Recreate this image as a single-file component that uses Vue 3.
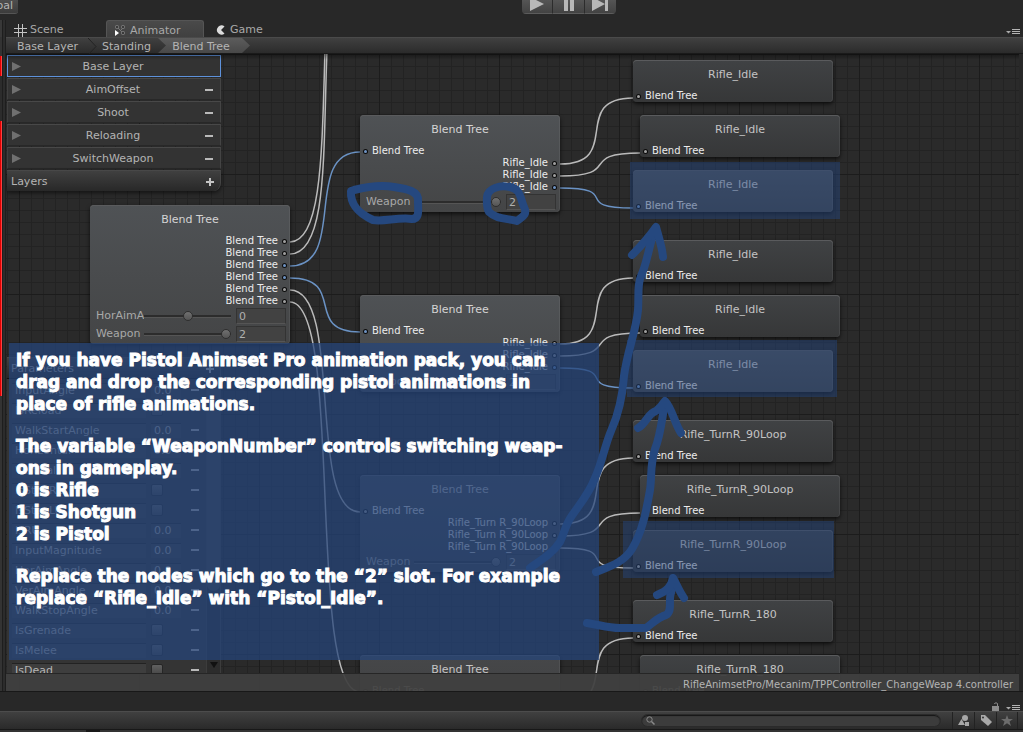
<script setup>
import { ref } from 'vue'

const layers = ['Base Layer', 'AimOffset', 'Shoot', 'Reloading', 'SwitchWeapon']

const params = ref([
  { name: 'InputAngle', value: '0.0' },
  { name: 'IsReload', on: false },
  { name: 'WalkStartAngle', value: '0.0' },
  { name: 'Horizontal', value: '0.0' },
  { name: 'Vertical', value: '0.0' },
  { name: 'IsStopRU', on: false },
  { name: 'IsStopLU', on: false },
  { name: 'IsRU', value: '0.0' },
  { name: 'InputMagnitude', value: '0.0' },
  { name: 'HorAimAngle', value: '0.0' },
  { name: 'VerAimAngle', value: '0.0' },
  { name: 'WalkStopAngle', value: '0.0' },
  { name: 'IsGrenade', on: false },
  { name: 'IsMelee', on: false },
  { name: 'IsDead', on: false },
])

const idle = ['Rifle_Idle', 'Rifle_Idle', 'Rifle_Idle']
const turn = ['Rifle_Turn R_90Loop', 'Rifle_Turn R_90Loop', 'Rifle_Turn R_90Loop']
const weapon = () => [{ name: 'Weapon', min: 0, max: 2, value: 2 }]

// Node positions are graph coordinates, measured from the canvas corner.
const nodes = ref([
  {
    x: 84, y: 151, title: 'Blend Tree', tone: 'bright', outputs: Array(6).fill('Blend Tree'), active: [2, 3],
    sliders: [{ name: 'HorAimAngle', min: -90, max: 90, value: 0 }, ...weapon()],
  },
  { x: 354, y: 61, title: 'Blend Tree', tone: 'bright', input: true, lit: true, outputs: idle, active: [2], sliders: weapon() },
  { x: 354, y: 241, title: 'Blend Tree', tone: 'bright', input: true, lit: true, outputs: idle, active: [2], sliders: weapon() },
  { x: 354, y: 421, title: 'Blend Tree', tone: 'mid', input: true, outputs: turn, active: [], sliders: weapon() },
  { x: 354, y: 601, title: 'Blend Tree', tone: 'mid', input: true, outputs: turn, active: [], sliders: weapon() },
  { x: 627, y: 6, title: 'Rifle_Idle', input: true },
  { x: 634, y: 61, title: 'Rifle_Idle', input: true },
  { x: 627, y: 116, title: 'Rifle_Idle', tone: 'bright', input: true, lit: true },
  { x: 627, y: 186, title: 'Rifle_Idle', input: true },
  { x: 634, y: 241, title: 'Rifle_Idle', input: true },
  { x: 627, y: 296, title: 'Rifle_Idle', tone: 'bright', input: true, lit: true },
  { x: 627, y: 366, title: 'Rifle_TurnR_90Loop', input: true },
  { x: 634, y: 421, title: 'Rifle_TurnR_90Loop', input: true },
  { x: 627, y: 476, title: 'Rifle_TurnR_90Loop', input: true },
  { x: 627, y: 546, title: 'Rifle_TurnR_180', input: true },
  { x: 634, y: 601, title: 'Rifle_TurnR_180', input: true },
])

const link = (x1, y1, x2, y2, lit = false, bend = 64) => ({
  d: `M${x1} ${y1} C${x1 + bend} ${y1} ${x2 - bend} ${y2} ${x2} ${y2}`,
  lit,
})
const links = [
  { d: 'M284 188 C316 188 316 96 319 -4' },
  { d: 'M284 200 C322 200 317 96 321 -4' },
  link(284, 212, 354, 98, true, 58),
  link(284, 224, 354, 278, true, 58),
  link(284, 236, 354, 458, false, 54),
  link(284, 248, 354, 638, false, 54),
  link(554, 110, 627, 44),
  link(554, 122, 634, 99),
  link(554, 134, 627, 154, true),
  link(554, 290, 627, 224),
  link(554, 302, 634, 279),
  link(554, 314, 627, 334, true),
  link(554, 470, 627, 404),
  link(554, 482, 634, 459),
  link(554, 494, 627, 514),
  link(554, 650, 627, 584),
  link(554, 662, 634, 639),
]

const marks = [
  { x: 624, y: 108, w: 210, h: 57 },
  { x: 621, y: 286, w: 210, h: 57 },
  { x: 617, y: 467, w: 211, h: 57 },
]

const px = (n) => n + 'px'
</script>

<template>
  <div class="editor">
    <header class="topbar">
      <button class="global" type="button">Global</button>
      <div class="play">
        <button type="button" aria-label="Play"><svg width="16" height="14"><path d="M1 0 15 7 1 14z" /></svg></button>
        <button type="button" aria-label="Pause"><svg width="16" height="14"><path d="M3 0h4v14H3zM9 0h4v14H9z" /></svg></button>
        <button type="button" aria-label="Step"><svg width="16" height="14"><path d="M0 0 13 7 0 14zM13 0h3v14h-3z" /></svg></button>
      </div>
    </header>

    <div class="workspace">
      <div class="rail">
        <i class="rail-bar"></i><i class="red short"></i><i class="rail-gap"></i><i class="red tall"></i><i class="rail-rest"></i>
      </div>
      <main class="dock">
        <nav class="tabs">
          <button class="tab scene" type="button">
            <svg width="13" height="13" stroke="#c4c4c4" fill="none"><path d="M4.500 0v13M8.500 0v13M0 4.500h13M0 8.500h13" /></svg>Scene
          </button>
          <button class="tab animator on" type="button">
            <svg width="11" height="11">
              <path d="M2 2 9 9M9 2 5 6" stroke="#777" />
              <g fill="#3a3a3a" stroke="#808080"><rect x=".5" y=".5" width="3" height="3" rx="1" /><rect x="6.500" y=".5" width="3" height="3" rx="1" /><rect x="6.500" y="6.500" width="3" height="3" rx="1" /></g>
              <path d="M0 5 4 8 0 11z" fill="#fff" />
            </svg>Animator
          </button>
          <button class="tab game" type="button">
            <svg width="10" height="10"><path d="M8.500 1.400A4.500 4.800 0 1 0 8.500 8.600L5 5z" fill="#dcdcdc" /></svg>Game
          </button>
          <button class="menu" type="button" aria-label="Panel menu">
            <svg width="14" height="6"><path d="M0 2h5L2.500 4.500z" fill="#aaa" /><path d="M6 .5h8M6 2.500h8M6 4.500h8" stroke="#b4b4b4" /></svg>
          </button>
        </nav>
        <nav class="crumbs">
          <button type="button">Base Layer</button>
          <svg width="9" height="17"><path d="M0 0 8 8.500 0 17" fill="none" stroke="#222" /></svg>
          <button type="button" class="standing">Standing</button>
          <button type="button" class="current">Blend Tree</button>
        </nav>

        <section class="canvas">
          <svg class="wires" width="1020" height="700">
            <path v-for="(l, i) in links" :key="i" :d="l.d" :class="{ lit: l.lit }" />
          </svg>

          <article
            v-for="(n, i) in nodes" :key="i" class="node" :class="[n.tone, { leaf: !n.sliders }]"
            :style="{ left: px(n.x), top: px(n.y) }"
          >
            <h3>{{ n.title }}</h3>
            <div v-if="n.input" class="port in"><i :class="{ lit: n.lit }"></i>Blend Tree</div>
            <div v-for="(o, k) in n.outputs" :key="k" class="port out">{{ o }}<i :class="{ lit: n.active.includes(k) }"></i></div>
            <div v-for="s in n.sliders" :key="s.name" class="slide">
              <label :for="s.name + i">{{ s.name }}</label>
              <input :id="s.name + i" v-model="s.value" type="range" :min="s.min" :max="s.max">
              <input v-model="s.value" type="text" :aria-label="s.name + ' value'">
            </div>
          </article>

          <aside class="layers">
            <button v-for="(l, i) in layers" :key="l" type="button" class="layer" :class="{ on: i === 0 }">
              <svg width="9" height="9"><path d="M0 0 9 4.500 0 9z" fill="#707070" /></svg>
              <span>{{ l }}</span><i class="minus" :class="{ none: i === 0 }"></i>
            </button>
            <div class="layers-foot"><span>Layers</span><button type="button" class="plus" aria-label="Add layer"></button></div>
          </aside>

          <aside class="params">
            <div class="params-head"><span>Parameters</span><button type="button" class="plus" aria-label="Add parameter"></button></div>
            <div class="params-body">
              <div class="rows">
                <div v-for="p in params" :key="p.name" class="row">
                  <input v-model="p.name" class="pname" type="text" aria-label="Parameter name">
                  <span class="pcell">
                    <input v-if="p.value" v-model="p.value" class="pval" type="text" :aria-label="p.name">
                    <input v-else v-model="p.on" type="checkbox" :aria-label="p.name">
                  </span>
                  <button type="button" class="minus" :aria-label="'Remove ' + p.name"></button>
                </div>
              </div>
              <div class="scroll"><div class="thumb"></div><svg width="8" height="6"><path d="M0 0h8L4 6z" fill="#111" /></svg></div>
            </div>
          </aside>

          <div
            v-for="(m, i) in marks" :key="i" class="mark"
            :style="{ left: px(m.x), top: px(m.y), width: px(m.w), height: px(m.h) }"
          ></div>
          <div class="note-bg"></div>
          <svg class="ink" width="1020" height="700" viewBox="6 54 1020 700">
            <path d="M354 190C366 187 382 185 394 187C407 189 419 191 418 201C418 210 420 219 412 219C398 217 384 222 373 220C360 214 350 206 351 191z" />
            <path d="M487 197C488 188 500 185 510 187C521 189 520 198 524 207C528 215 522 217 517 221C508 218 497 220 489 212C486 207 487 202 487 197z" />
            <path d="M530 568C541 560 552 554 560 542C564 534 565 526 571 517C579 505 589 494 595 478C602 463 605 445 611 431C621 409 623 390 624 376C627 352 636 332 638 310C639 296 637 285 641 276C647 264 649 245 655 229" />
            <path d="M632 255C640 247 649 237 656 227C658 235 662 246 663 257" />
            <path d="M596 572C611 566 624 562 632 549C642 532 646 513 650 490C652 477 650 464 655 449C661 434 662 417 665 403" />
            <path d="M638 428C646 424 648 413 656 411Q661 407 665 401C672 408 674 422 681 433" />
            <path d="M587 623C600 625 608 628 620 628H646C653 623 658 617 666 615C673 611 668 600 671 593L673 580" />
            <path d="M657 595C667 591 671 587 673 578C677 585 679 591 684 598" />
          </svg>
          <div class="note">
            <p>If you have Pistol Animset Pro animation pack, you can<br>drag and drop the corresponding pistol animations in<br>place of rifle animations.</p>
            <p>The variable “WeaponNumber” controls switching weap-<br>ons in gameplay.<br>0 is Rifle<br>1 is Shotgun<br>2 is Pistol</p>
            <p>Replace the nodes which go to the “2” slot. For example<br>replace “Rifle_Idle” with “Pistol_Idle”.</p>
          </div>
          <footer class="path">RifleAnimsetPro/Mecanim/TPPController_ChangeWeap 4.controller</footer>
        </section>
      </main>
    </div>

    <div class="lower-head">
      <svg width="8" height="9"><path d="M0 4h7v5H0z" fill="#8c8c8c" /><path d="M2.500 2V1.500Q4 0 5.500 1.500V4" fill="none" stroke="#8c8c8c" /></svg>
      <button class="menu" type="button" aria-label="Panel menu">
        <svg width="14" height="6"><path d="M0 2h5L2.500 4.500z" fill="#aaa" /><path d="M6 .5h8M6 2.500h8M6 4.500h8" stroke="#b4b4b4" /></svg>
      </button>
    </div>
    <div class="lower-bar">
      <label class="search">
        <svg width="9" height="9" fill="none" stroke="#8a8a8a"><circle cx="3.500" cy="3.500" r="2.700" /><path d="M5.500 5.500 8.500 8.500" stroke-width="1.500" /></svg>
        <input type="text" aria-label="Search">
      </label>
      <button type="button" class="tool" aria-label="Filter by type"><svg width="12" height="11" fill="#a8a8a8"><circle cx="7" cy="3" r="3" /><path d="M3.500 4 7 10H0zM7 7h4v4H7z" /></svg></button>
      <button type="button" class="tool" aria-label="Filter by label"><svg width="12" height="11"><path d="M1 0h4l7 7-4 4-7-6z" fill="#a8a8a8" /><circle cx="3" cy="2.500" r="1" fill="#333" /></svg></button>
      <button type="button" class="tool last" aria-label="Favourite"><svg width="12" height="11"><path d="M6 0 7.500 4H12L8.500 6.500 10 11 6 8.300 2 11 3.500 6.500 0 4h4.500z" fill="#6c6c6c" /></svg></button>
    </div>
    <div class="lower-edge"><i></i></div>
  </div>
</template>

<style>
body { background: #282828; }
</style>

<style scoped>
* { box-sizing: border-box; }
.editor {
  display: flex; flex-direction: column; height: 100vh; overflow: hidden;
  background: #282828; color: #b4b4b4; font: 11px/14px "DejaVu Sans", sans-serif;
}
button, input { font: inherit; color: inherit; border: 0; background: none; margin: 0; padding: 0; }
button { cursor: pointer; }
svg { flex: none; display: block; }
i { flex: none; display: block; }

.topbar { display: grid; grid-template-columns: 1fr auto 1fr; height: 14px; margin-bottom: 6px; }
.global {
  width: 18px; display: flex; justify-content: flex-end; padding-right: 5px; overflow: hidden; line-height: 12px;
  background: linear-gradient(#4e4e4e, #3c3c3c); border-radius: 0 0 3px 0; border-bottom: 1px solid #555;
}
.play { display: flex; grid-column: 2; margin-left: 114px; width: 94px; overflow: hidden; border-radius: 0 0 4px 4px; }
.play button {
  flex: 1; display: flex; align-items: flex-end; justify-content: center; height: 14px; padding-bottom: 2px;
  background: linear-gradient(#555, #434343); border-bottom: 1px solid #5c5c5c; border-right: 1px solid #2c2c2c;
}
.play button:last-child { border-right: 0; }
.play svg { fill: #b8b8b8; }

.workspace { flex: 1; display: flex; min-height: 0; }
.rail { width: 6px; display: flex; flex-direction: column; padding-top: 17px; background: linear-gradient(90deg, #383838 2px, #1e1e1e 2px 3px, #2c2c2c 3px 5px, #1e1e1e 5px); }
.rail i { width: 2px; }
.rail-bar { height: 19px; background: #333; }
.rail-gap { height: 45px; background: #2c2c2c; }
.red { background: #e00000; border-right: 1px solid #ff4040; }
.short { height: 20px; }
.tall { height: 275px; }
.rail-rest { flex: 1; background: #333; }

.dock { flex: 1; min-width: 0; display: flex; flex-direction: column; }
.tabs { display: flex; height: 17px; color: #a8a8a8; }
.tab { display: flex; align-items: center; gap: 3px; padding-top: 3px; }
.scene { width: 100px; padding-left: 8px; }
.animator { width: 98px; padding-left: 8px; gap: 4px; }
.animator.on { background: linear-gradient(#4a4a4a, #404040); border: 1px solid #555; border-bottom: 0; border-radius: 3px 3px 0 0; }
.game { padding-left: 12px; gap: 4px; }
.menu { margin-left: auto; padding-right: 3px; }
.tabs .menu { padding-top: 7px; }

.crumbs {
  display: flex; height: 17px; background: linear-gradient(#404040, #2b2b2b);
  border-top: 1px solid #4a4a4a; border-bottom: 1px solid #1a1a1a; padding-left: 11px;
}
.crumbs button { line-height: 15px; padding-top: 1px; }
.crumbs button:first-child { width: 71px; text-align: left; }
.crumbs .standing { width: 60px; padding: 1px 5px 0; text-align: left; }
.crumbs .current { width: 92px; margin-left: 1px; padding-right: 6px; background: linear-gradient(#5c5c5c, #484848); clip-path: polygon(0 0, 84px 0, 100% 50%, 84px 100%, 0 100%, 8px 50%); }

.canvas {
  flex: 1; position: relative; overflow: hidden; min-height: 0; margin-right: 4px;
  background:
    repeating-linear-gradient(90deg, transparent 0 13px, #1c1c1c 13px 14px, transparent 14px 120px),
    repeating-linear-gradient(#1c1c1c 0 1px, transparent 1px 120px),
    repeating-linear-gradient(90deg, transparent 0 1px, #232323 1px 2px, transparent 2px 12px),
    repeating-linear-gradient(#232323 0 1px, transparent 1px 12px),
    #2a2a2a;
}
.canvas::after { content: ""; position: absolute; inset: 0 0 auto; height: 6px; background: linear-gradient(#0006, #0000); pointer-events: none; }
.wires, .ink { position: absolute; left: 0; top: 0; pointer-events: none; }
.wires { fill: none; stroke: #bababa; stroke-width: 1.500; }
.wires .lit { stroke: #6a92c4; }
.ink { fill: none; stroke: #25487f; stroke-width: 8; stroke-linecap: round; stroke-linejoin: round; }

.node {
  position: absolute; width: 200px; padding-bottom: 1px; border-radius: 4px; color: #c4c4c4;
  background: linear-gradient(#464749, #3c3d3e);
  box-shadow: inset 0 1px #5a5b5d, inset -1px 0 #ffffff10, 0 2px 4px #000a;
}
.node.leaf { padding-bottom: 0; background: linear-gradient(#404244, #363738); }
.node.bright { background: linear-gradient(#4f5255, #444546); color: #d4d4d4; }
.node h3 { margin: 0; font-size: 11px; font-weight: 400; line-height: 30px; height: 30px; text-align: center; }
.port { display: flex; align-items: center; gap: 5px; height: 12px; padding: 0 4px; font-size: 10px; line-height: 12px; color: #ececec; }
.port.out { justify-content: flex-end; }
.port i { width: 3px; height: 3px; border-radius: 50%; background: #a0a0a0; box-shadow: 0 0 0 1px #0c0c0c; margin-top: 1px; }
.port i.lit { background: #6f94c4; }
.slide { display: grid; grid-template-columns: 48px 87px 55px; align-items: center; height: 18px; padding-left: 6px; }
.slide label { overflow: hidden; white-space: nowrap; color: #a8a8a8; line-height: 18px; }
.slide input[type="text"] { width: 50px; height: 16px; margin-left: 5px; padding-left: 2px; color: #b0b0b0; background: #424242; border: 1px solid #333; border-bottom-color: #555; }
.slide input[type="range"] { appearance: none; width: 87px; height: 10px; background: linear-gradient(transparent 4px, #2c2c2c 4px 6px, #555 6px 7px, transparent 7px); }
.slide input[type="range"]::-webkit-slider-thumb { appearance: none; width: 10px; height: 10px; border-radius: 50%; background: linear-gradient(#707070, #555); border: 1px solid #2e2e2e; }

.layers { position: absolute; left: 1px; top: 1px; width: 214px; display: flex; flex-direction: column; gap: 1px; }
.layer {
  display: grid; grid-template-columns: 9px 1fr 9px; align-items: center; height: 22px; padding: 1px 6px 0 4px;
  background: #333; border: 1px solid #282828; border-top-color: #484848; border-left-color: #404040; border-right-color: #444;
}
.layer.on { border-color: #5e92dc; }
.minus { width: 8px; height: 2px; background: #bababa; }
.minus.none { visibility: hidden; }
.layers-foot, .params-head {
  display: flex; align-items: center; justify-content: space-between; height: 21px; padding: 1px 6px 0 4px;
  background: linear-gradient(#404040, #282828); border-right: 1px solid #444; border-top: 1px solid #484848;
}
.layers-foot { border-radius: 0 0 8px 0; box-shadow: 0 2px 4px #0008; }
.plus { width: 8px; height: 8px; background: linear-gradient(#c4c4c4, #c4c4c4) center / 8px 2px no-repeat, linear-gradient(#c4c4c4, #c4c4c4) center / 2px 8px no-repeat; }

.params { position: absolute; left: 1px; top: 303px; width: 214px; background: #343434; }
.params-head { height: 22px; border-bottom: 1px solid #111; }
.params-body { display: flex; height: 294px; overflow: hidden; }
.rows { flex: 1; padding-top: 1px; }
.row { display: flex; align-items: center; height: 20px; padding-left: 5px; gap: 5px; }
.pname { width: 134px; height: 15px; padding: 0 3px; background: #3e3e3e; border-top: 1px solid #222; }
.pcell { width: 30px; display: flex; }
.pval { width: 30px; height: 15px; padding: 0 3px; background: #3e3e3e; border-top: 1px solid #222; }
.pcell input[type="checkbox"] { appearance: none; width: 12px; height: 12px; border-radius: 2px; background: linear-gradient(#606060, #464646); border: 1px solid #262626; }
.row .minus { margin-left: 5px; }
.scroll { width: 15px; display: flex; flex-direction: column; align-items: center; justify-content: space-between; padding-bottom: 5px; background: #2c2c2c; border: solid #3c3c3c; border-width: 0 1px; }
.thumb { width: 13px; height: 212px; border-radius: 0 0 7px 7px; background: #424242; }

.mark { position: absolute; background: #24437a80; }
.note-bg, .note { position: absolute; left: 3px; top: 289px; width: 590px; height: 317px; }
.note-bg { background: #254479bb; }
.note {
  display: flex; flex-direction: column; gap: 20px; padding: 6px 7px; color: #fff;
  font-size: 17px; font-weight: 700; line-height: 22px; -webkit-text-stroke: 1px #fff;
}
.note p { margin: 0; white-space: nowrap; }
.path {
  position: absolute; left: 0; right: 0; bottom: 0; height: 18px; padding-right: 6px;
  font-size: 10px; line-height: 22px; text-align: right; white-space: nowrap; overflow: hidden; background: #404040f0; border-top: 1px solid #262626;
}

.lower-head { display: flex; justify-content: flex-end; align-items: center; height: 20px; padding-top: 10px; gap: 6px; border-top: 1px solid #181818; }
.lower-head .menu { margin: 0; padding-top: 2px; }
.lower-bar { display: flex; align-items: center; justify-content: flex-end; height: 19px; padding-right: 5px; background: linear-gradient(#404040, #2a2a2a); border-top: 1px solid #4c4c4c; border-bottom: 1px solid #181818; }
.search { display: flex; align-items: center; width: 300px; height: 13px; padding: 0 4px; gap: 5px; margin-right: 11px; border-radius: 7px; background: #3c3c3c; box-shadow: inset 0 1px 1px #151515; border: 1px solid #2a2a2a; }
.search input { flex: 1; min-width: 0; height: 11px; outline: 0; }
.tool { width: 22px; height: 17px; display: flex; align-items: center; justify-content: center; border-left: 1px solid #222; }
.tool.last { border-right: 1px solid #222; }
.lower-edge { height: 2px; background: #333; padding-left: 86px; }
.lower-edge i { width: 14px; height: 2px; background: #181818; }
</style>
